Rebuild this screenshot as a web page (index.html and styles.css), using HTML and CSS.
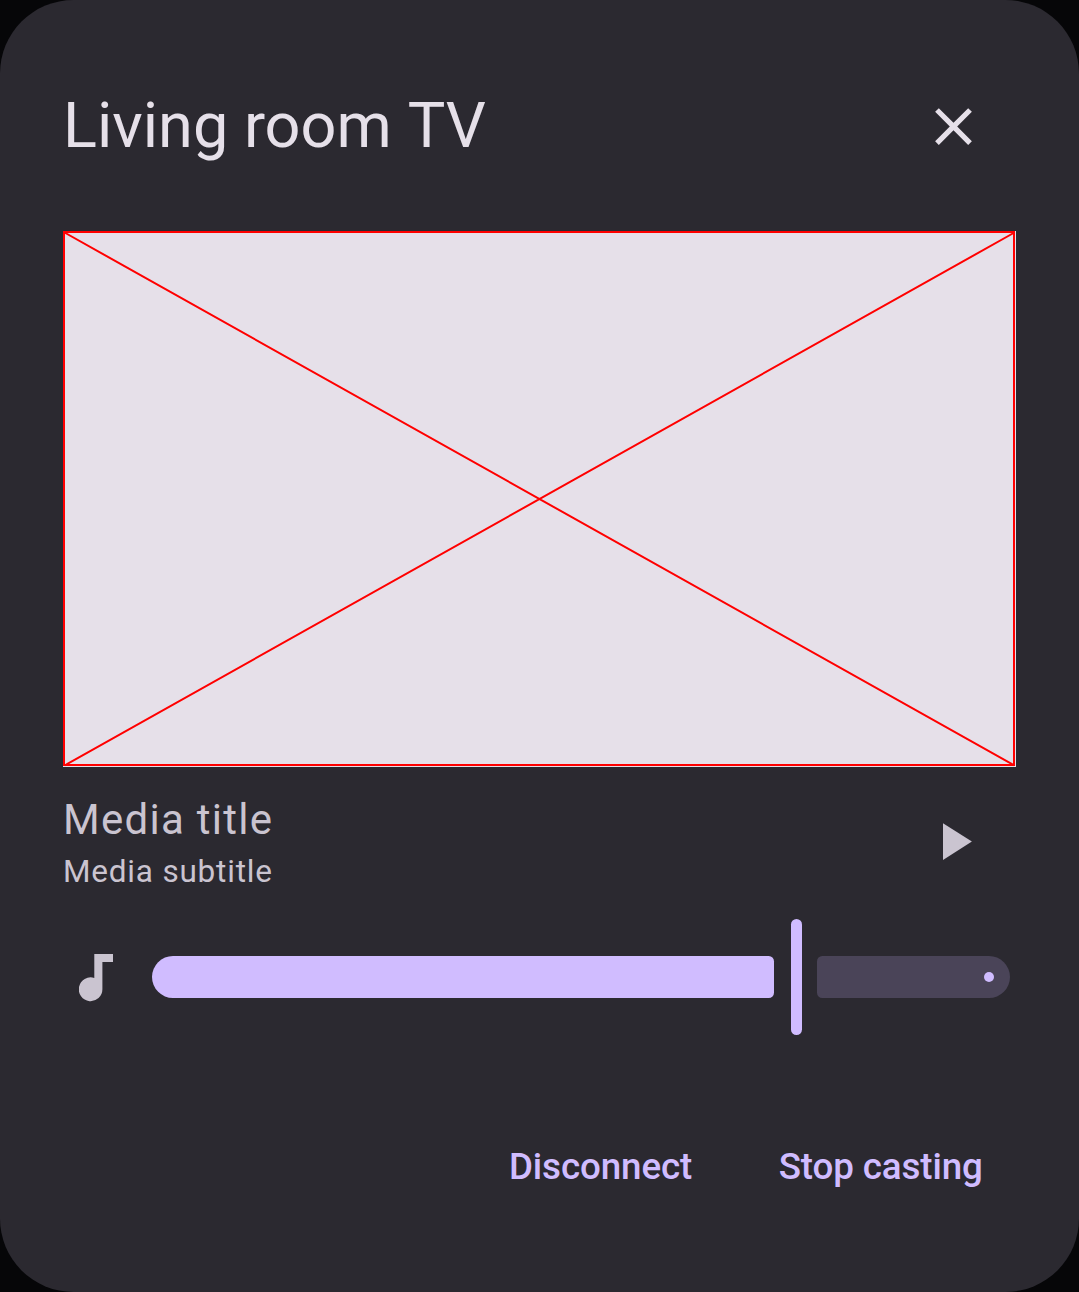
FILE: index.html
```html
<!DOCTYPE html>
<html lang="en">
<head>
<meta charset="utf-8">
<title>Living room TV</title>
<link rel="stylesheet" href="styles.css">
</head>
<body>
<main class="dialog">
  <header class="header">
    <h1 class="title">Living room <span class="title-tail">TV</span></h1>
    <button class="icon-button" aria-label="Close">
      <svg class="icon" viewBox="0 0 24 24"><path d="M19 6.41 17.59 5 12 10.59 6.41 5 5 6.41 10.59 12 5 17.59 6.41 19 12 13.41 17.59 19 19 17.59 13.41 12z"/></svg>
    </button>
  </header>
  <svg class="artwork" viewBox="0 0 953 536">
    <path d="M1 1H951V534H1zM1.5 1.5 951.5 534.5M1.5 534.5 951.5 1.5"/>
  </svg>
  <section class="media">
    <div class="media-text">
      <div class="media-title">Media title</div>
      <div class="media-subtitle">Media subtitle</div>
    </div>
    <button class="icon-button icon-play" aria-label="Play">
      <svg class="icon" viewBox="0 0 24 24"><path d="M8 5v14l11-7z"/></svg>
    </button>
  </section>
  <section class="volume">
    <svg class="note" viewBox="0 0 35 50"><path d="M15.3 2H34V9.9H23.4V37.2A11.8 11.9 0 1 1 15.3 26z"/></svg>
    <div class="slider">
      <div class="track-active"></div>
      <div class="thumb"></div>
      <div class="track-rest"><span class="stop"></span></div>
    </div>
  </section>
  <footer class="actions">
    <button class="action">Disconnect</button>
    <button class="action">Stop casting</button>
  </footer>
</main>
</body>
</html>
```
FILE: styles.css
```css
* { box-sizing: border-box; }
body {
  margin: 0;
  background: #060608;
  font-family: Roboto, sans-serif;
}
button {
  border: 0;
  padding: 0;
  background: none;
  font: inherit;
  color: inherit;
}
.dialog {
  width: 1079px;
  height: 1292px;
  padding: 84px 63px 0;
  border-radius: 73.5px;
  background: #2b2930;
  color: #cac4d0;
}
.header {
  display: flex;
  justify-content: space-between;
  align-items: center;
  height: 84px;
  padding-right: 31px;
  color: #e6e0e9;
}
.title {
  margin: 0;
  font-size: 63px;
  font-weight: 400;
  line-height: 84px;
}
.title-tail {
  margin-left: 0.3px;
}
.icon-button {
  display: flex;
}
.icon {
  width: 63px;
  height: 63px;
  fill: currentColor;
}
.artwork {
  display: block;
  width: 953px;
  height: 536px;
  margin-top: 63px;
  background: #e6e0e9;
  fill: none;
  stroke: #f00;
  stroke-width: 2;
}
.media {
  display: flex;
  justify-content: space-between;
  align-items: center;
  height: 125px;
  padding: 23px 31px 0 0;
}
.media-title {
  font-size: 42px;
  line-height: 60px;
  letter-spacing: 1.27px;
}
.media-subtitle {
  height: 42px;
  font-size: 31.5px;
  line-height: 44px;
  letter-spacing: 0.8px;
}
.volume {
  display: flex;
  align-items: center;
  height: 116px;
  margin-top: 27px;
  padding: 0 6px 0 16px;
}
.note {
  width: 35px;
  height: 50px;
  fill: currentColor;
}
.slider {
  display: flex;
  align-items: center;
  flex: 1;
  margin-left: 38px;
}
.track-active {
  width: 622.3px;
  height: 42px;
  border-radius: 21px 5.25px 5.25px 21px;
  background: #d0bcff;
}
.thumb {
  width: 11px;
  height: 116px;
  margin: 0 15px 0 16.7px;
  border-radius: 5.5px;
  background: #d0bcff;
}
.track-rest {
  display: flex;
  align-items: center;
  justify-content: flex-end;
  flex: 1;
  height: 42px;
  padding-right: 15.75px;
  border-radius: 5.25px 21px 21px 5.25px;
  background: #4a4458;
}
.stop {
  width: 10.5px;
  height: 10.5px;
  border-radius: 50%;
  background: #d0bcff;
}
.actions {
  display: flex;
  justify-content: flex-end;
  gap: 86.5px;
  margin-top: 103.5px;
  padding-right: 33.3px;
  color: #d0bcff;
}
.action {
  font-size: 36.75px;
  font-weight: 500;
  line-height: 56px;
  letter-spacing: -0.12px;
}
```
